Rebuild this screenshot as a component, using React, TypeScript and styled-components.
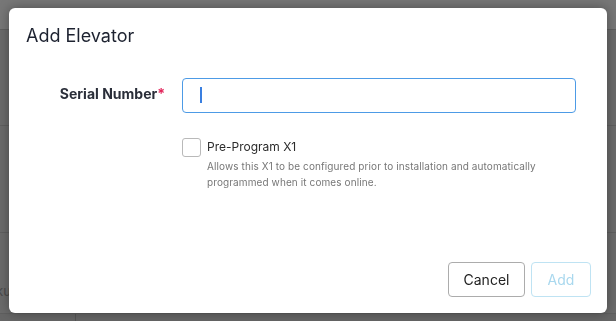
import React, { useState } from 'react';
import styled, { createGlobalStyle } from 'styled-components';

const GlobalStyle = createGlobalStyle`
  html, body {
    margin: 0;
    padding: 0;
    width: 616px;
    height: 321px;
    overflow: hidden;
    font-family: Inter, 'Liberation Sans', sans-serif;
  }
`;

export default function App() {
  const [serial, setSerial] = useState('');
  const [preProgram, setPreProgram] = useState(false);

  return (
    <>
      <GlobalStyle />
      <Backdrop>
        <TopBand />
        <Band height={95} />
        <Band height={106} />
        <Band height={80}>
          <SideText>ku</SideText>
        </Band>
        <BottomBand>
          <BottomCell />
        </BottomBand>
      </Backdrop>
      <Overlay>
        <Modal>
          <Title>Add Elevator</Title>
          <Body>
            <Row>
              <Label>
                Serial Number<Required>*</Required>
              </Label>
              <InputWrap>
                <Caret />
                <Input value={serial} onChange={(e) => setSerial(e.target.value)} />
              </InputWrap>
            </Row>
            <Row>
              <span />
              <CheckRow>
                <Check checked={preProgram} onClick={() => setPreProgram((p) => !p)} />
                <CheckText>
                  <CheckLabel>Pre-Program X1</CheckLabel>
                  <Hint>
                    Allows this X1 to be configured prior to installation and automatically
                    <br />
                    programmed when it comes online.
                  </Hint>
                </CheckText>
              </CheckRow>
            </Row>
          </Body>
          <Footer>
            <Button>Cancel</Button>
            <Button primary disabled>Add</Button>
          </Footer>
        </Modal>
      </Overlay>
    </>
  );
}

const Backdrop = styled.div`
  display: flex;
  flex-direction: column;
  height: 321px;
  background: #6b6b6b;
`;

const TopBand = styled.div`
  height: 29px;
  background: #777777;
  border-bottom: 1px solid #5f5f5f;
`;

const Band = styled.div<{ height: number }>`
  height: ${({ height }) => height}px;
  border-bottom: 1px solid #5f5f5f;
  position: relative;
`;

const SideText = styled.span`
  position: absolute;
  left: -4px;
  top: 50px;
  font-size: 13px;
  color: #4a4a4a;
`;

const BottomBand = styled.div`
  flex: 1;
  display: flex;
  background: #666;
`;

const BottomCell = styled.div`
  width: 75px;
  border-right: 1px solid #555;
`;

const Overlay = styled.div`
  position: fixed;
  inset: 0;
  padding: 8px 9px;
  display: flex;
`;

const Modal = styled.div`
  flex: 1;
  background: #fff;
  border-radius: 6px;
  box-shadow: 0 0 12px rgba(0, 0, 0, 0.35);
  display: flex;
  flex-direction: column;
  padding: 15px 16px 16px 17px;
  box-sizing: border-box;
`;

const Title = styled.h2`
  margin: 0;
  font-size: 18px;
  font-weight: 400;
  line-height: 26px;
  color: #1d2230;
`;

const Body = styled.div`
  flex: 1;
  display: flex;
  flex-direction: column;
  gap: 25px;
  padding-top: 29px;
`;

const Row = styled.div`
  display: grid;
  grid-template-columns: 139px 394px;
  column-gap: 17px;
  align-items: start;
`;

const Label = styled.label`
  text-align: right;
  font-size: 14px;
  font-weight: 700;
  line-height: 31px;
  color: #2a2e39;
`;

const Required = styled.span`
  color: #e2245a;
`;

const InputWrap = styled.div`
  position: relative;
  height: 35px;
  border: 1px solid #4d9be6;
  border-radius: 4px;
  box-sizing: border-box;
`;

const Caret = styled.span`
  position: absolute;
  left: 17px;
  top: 8px;
  width: 2px;
  height: 16px;
  background: #3a7fe0;
`;

const Input = styled.input`
  width: 100%;
  height: 100%;
  border: none;
  outline: none;
  background: transparent;
  padding: 0 18px;
  box-sizing: border-box;
  font-family: inherit;
  font-size: 14px;
  caret-color: transparent;
`;

const CheckRow = styled.div`
  display: flex;
  gap: 6px;
  align-items: flex-start;
`;

const Check = styled.span<{ checked: boolean }>`
  flex: none;
  width: 19px;
  height: 19px;
  border: 1px solid #b9b9b9;
  border-radius: 3px;
  box-sizing: border-box;
  background: ${({ checked }) => (checked ? '#4d9be6' : '#fff')};
  cursor: pointer;
`;

const CheckText = styled.div`
  display: flex;
  flex-direction: column;
`;

const CheckLabel = styled.span`
  font-size: 12px;
  line-height: 17px;
  color: #2c2c2c;
`;

const Hint = styled.p`
  margin: 3px 0 0;
  font-size: 10px;
  line-height: 16px;
  letter-spacing: 0.1px;
  color: #777;
`;

const Footer = styled.div`
  display: flex;
  justify-content: flex-end;
  gap: 6px;
`;

const Button = styled.button<{ primary?: boolean }>`
  height: 35px;
  width: ${({ primary }) => (primary ? 60 : 77)}px;
  padding: 0;
  border-radius: 4px;
  background: #fff;
  font-family: inherit;
  font-size: 14px;
  border: 1px solid ${({ primary }) => (primary ? '#bfe3f3' : '#acacac')};
  color: ${({ primary }) => (primary ? '#a9d8ee' : '#222')};
`;
